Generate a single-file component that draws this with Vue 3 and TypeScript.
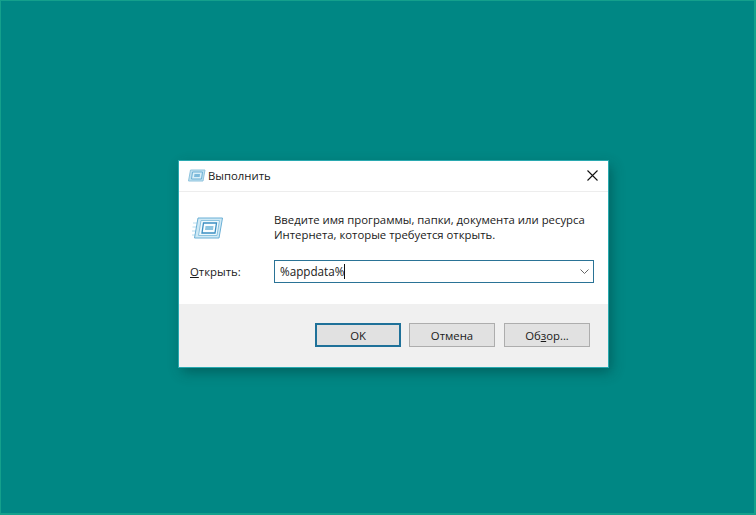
<script setup lang="ts">
import { ref } from 'vue'

const command = ref('%appdata%')
const promptLines = [
  'Введите имя программы, папки, документа или ресурса',
  'Интернета, которые требуется открыть.',
]
</script>

<template>
  <div class="desktop">
    <section class="dialog" aria-label="Выполнить">
      <header class="titlebar">
        <svg class="title-icon" viewBox="0 0 19 13" width="19" height="13" aria-hidden="true">
          <path d="M3.500 1H18L16 12H1.500Z" fill="#bfe0ef" stroke="#8fc4de" />
          <path d="M5.500 3H15.500L14.500 10H4.500Z" fill="#d9eff8" stroke="#6cb0d4" />
          <path d="M7.500 5H13L12.700 8H7Z" fill="#7dbadb" />
        </svg>
        <span class="title">Выполнить</span>
        <svg class="close" viewBox="0 0 11 11" width="11" height="11" aria-hidden="true">
          <path d="M0.500 0.500L10.500 10.500M10.500 0.500L0.500 10.500" stroke="#111" stroke-width="1.100" fill="none" />
        </svg>
      </header>

      <div class="content">
        <div class="intro">
          <svg class="run-icon" viewBox="0 0 31 22" width="31" height="22" aria-hidden="true">
            <path d="M1 6H5M0.500 10H4.500M0 14H4M0 18H3.500" stroke="#b5dcee" stroke-width="1" fill="none" />
            <path d="M6 1H30.500L27 21H2.500Z" fill="#cfe9f5" stroke="#6bb0d6" />
            <path d="M9 3.500H27.500L25 18.500H6.500Z" fill="#eef9fd" stroke="#8cc4e0" />
            <path d="M11.500 6H24.500L23 16H10Z" fill="#f8fdff" stroke="#3b8fc2" stroke-width="1.300" />
            <path d="M13.500 9H21.500L21 13H13Z" fill="#8cc4e0" />
          </svg>
          <p class="prompt">
            <span v-for="line in promptLines" :key="line">{{ line }}</span>
          </p>
        </div>

        <div class="field">
          <label class="field-label" for="cmd"><u>О</u>ткрыть:</label>
          <div class="combo">
            <span id="cmd" class="combo-value">{{ command }}<i class="caret"></i></span>
            <svg class="chevron" viewBox="0 0 9 5" width="9" height="5" aria-hidden="true">
              <path d="M0.500 0.500L4.500 4.500L8.500 0.500" stroke="#666" stroke-width="1" fill="none" />
            </svg>
          </div>
        </div>
      </div>

      <footer class="actions">
        <button class="btn btn-default" type="button">OK</button>
        <button class="btn btn-middle" type="button">Отмена</button>
        <button class="btn" type="button">Об<u>з</u>ор...</button>
      </footer>
    </section>
  </div>
</template>

<style>
html, body { margin: 0; padding: 0; }
</style>

<style scoped>
.desktop {
  box-sizing: border-box;
  width: 756px;
  height: 515px;
  padding: 161px 0 0 179px;
  background: #008784;
  box-shadow: inset -2px -2px 0 #14a08c, inset 1px 1px 0 #14a08c;
  overflow: hidden;
  font-family: "Open Sans", "Noto Sans", sans-serif;
  font-size: 11.330px;
  color: #1a1a1a;
}
.dialog {
  box-sizing: border-box;
  width: 429px;
  height: 206px;
  display: flex;
  flex-direction: column;
  background: #fff;
  box-shadow: 0 0 0 1px #2aa9b0, 3px 5px 12px rgba(0, 50, 50, 0.45);
}
.titlebar {
  box-sizing: border-box;
  height: 31px;
  flex: none;
  display: flex;
  align-items: center;
  padding: 0 10px 1px 8px;
  border-bottom: 1px solid #ededed;
}
.title-icon { flex: none; }
.title { margin-left: 2px; flex: 1; font-size: 11.330px; }
.close { flex: none; }
.content {
  flex: 1;
  padding: 20px 14px 0 11px;
}
.intro {
  display: flex;
  align-items: flex-start;
}
.run-icon { flex: none; margin: 5px 0 0 2px; }
.prompt {
  margin: 0 0 0 51px;
  display: flex;
  flex-direction: column;
  line-height: 15px;
  white-space: nowrap;
}
.field {
  display: flex;
  align-items: center;
  margin-top: 18px;
}
.field-label {
  width: 84px;
  flex: none;
  padding-bottom: 1px;
}
.combo {
  box-sizing: border-box;
  width: 320px;
  height: 23px;
  display: flex;
  align-items: center;
  justify-content: space-between;
  padding: 0 4px 0 5px;
  border: 1px solid #2a7396;
  background: #fff;
}
.combo-value { display: inline-flex; align-items: center; font-size: 11.700px; padding-bottom: 1px; }
.caret {
  width: 1px;
  height: 15px;
  background: #111;
}
.chevron { flex: none; }
.actions {
  box-sizing: border-box;
  height: 63px;
  flex: none;
  display: flex;
  justify-content: flex-end;
  gap: 8px;
  padding: 19px 18px 0 0;
  background: #f0f0f0;
}
.btn {
  box-sizing: border-box;
  width: 86px;
  height: 24px;
  padding: 0;
  border: 1px solid #adadad;
  background: #e1e1e1;
  font: inherit;
  color: #1a1a1a;
}
.btn-middle { margin-right: 1px; }
.btn-default {
  border: 2px solid #1f7199;
}
</style>
